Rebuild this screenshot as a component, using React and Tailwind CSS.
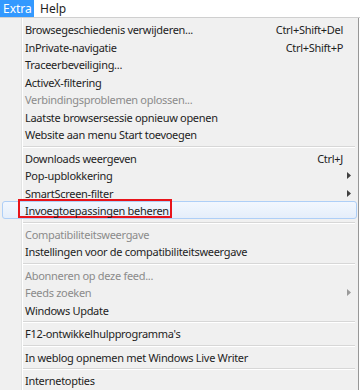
import React from 'react';

const groups = [
  [
    { label: 'Browsegeschiedenis verwijderen...', shortcut: 'Ctrl+Shift+Del' },
    { label: 'InPrivate-navigatie', shortcut: 'Ctrl+Shift+P' },
    { label: 'Traceerbeveiliging...' },
    { label: 'ActiveX-filtering' },
    { label: 'Verbindingsproblemen oplossen...', disabled: true },
    { label: 'Laatste browsersessie opnieuw openen' },
    { label: 'Website aan menu Start toevoegen' },
  ],
  [
    { label: 'Downloads weergeven', shortcut: 'Ctrl+J' },
    { label: 'Pop-upblokkering', submenu: true },
    { label: 'SmartScreen-filter', submenu: true },
    { label: 'Invoegtoepassingen beheren', active: true },
  ],
  [
    { label: 'Compatibiliteitsweergave', disabled: true },
    { label: 'Instellingen voor de compatibiliteitsweergave' },
  ],
  [
    { label: 'Abonneren op deze feed...', disabled: true },
    { label: 'Feeds zoeken', disabled: true, submenu: true },
    { label: 'Windows Update' },
  ],
  [{ label: "F12-ontwikkelhulpprogramma's" }],
  [{ label: 'In weblog opnemen met Windows Live Writer' }],
  [{ label: 'Internetopties' }],
];

const MenuItem = ({ label, shortcut, submenu, disabled, active }) => (
  <div className="relative h-[17.5px] flex items-center">
    {active && (
      <>
        <div className="absolute left-[2px] right-[1px] top-[-1px] bottom-[1px] rounded-[3px] border border-[#aecff7] bg-gradient-to-b from-[#f2f7fe] to-[#e5eefa]" />
        <div className="absolute left-[18px] w-[154px] top-[-3px] h-[19px] border-2 border-[#e8141b]" />
      </>
    )}
    <span className={`relative pl-[25px] flex-1 whitespace-nowrap ${disabled ? 'text-[#8b8b8b]' : 'text-[#1e1e1e]'}`}>
      {label}
    </span>
    {shortcut && <span className="relative pr-[15px] text-[#1e1e1e]">{shortcut}</span>}
    {submenu && (
      <svg width="4" height="7" viewBox="0 0 4 7" className="relative mr-[7px]">
        <path d="M0 0 L4 3.5 L0 7 Z" fill={disabled ? '#9a9a9a' : '#404040'} />
      </svg>
    )}
  </div>
);

const Separator = () => (
  <div className="h-[6px] pl-[22px] pr-[3px] flex flex-col justify-center">
    <div className="h-px bg-[#d7d7d7]" />
    <div className="h-px bg-white" />
  </div>
);

export default function App() {
  return (
    <div
      className="w-[360px] h-[390px] overflow-hidden bg-white text-[11px] tracking-[-0.3px] leading-none"
      style={{ fontFamily: '"Segoe UI", "Noto Sans", sans-serif' }}
    >
      <div className="h-[18px] flex items-stretch border-b border-[#cfcfcf] bg-white text-[12px] tracking-normal">
        <div className="w-[34px] bg-[#3399ff] text-white flex items-center pl-[3px]">Extra</div>
        <div className="flex items-center pl-[6px] text-[#1e1e1e]">Help</div>
      </div>
      <div className="relative w-[359px] h-[372px] bg-[#f0f0f0] border-r border-[#979797] pt-[3px]">
        <div className="absolute left-[21px] top-0 bottom-0 w-px bg-[#e2e3e3]" />
        <div className="absolute left-[22px] top-0 bottom-0 w-px bg-white" />
        {groups.map((items, gi) => (
          <React.Fragment key={gi}>
            {gi > 0 && <Separator />}
            {items.map((it) => (
              <MenuItem key={it.label} {...it} />
            ))}
          </React.Fragment>
        ))}
      </div>
    </div>
  );
}
